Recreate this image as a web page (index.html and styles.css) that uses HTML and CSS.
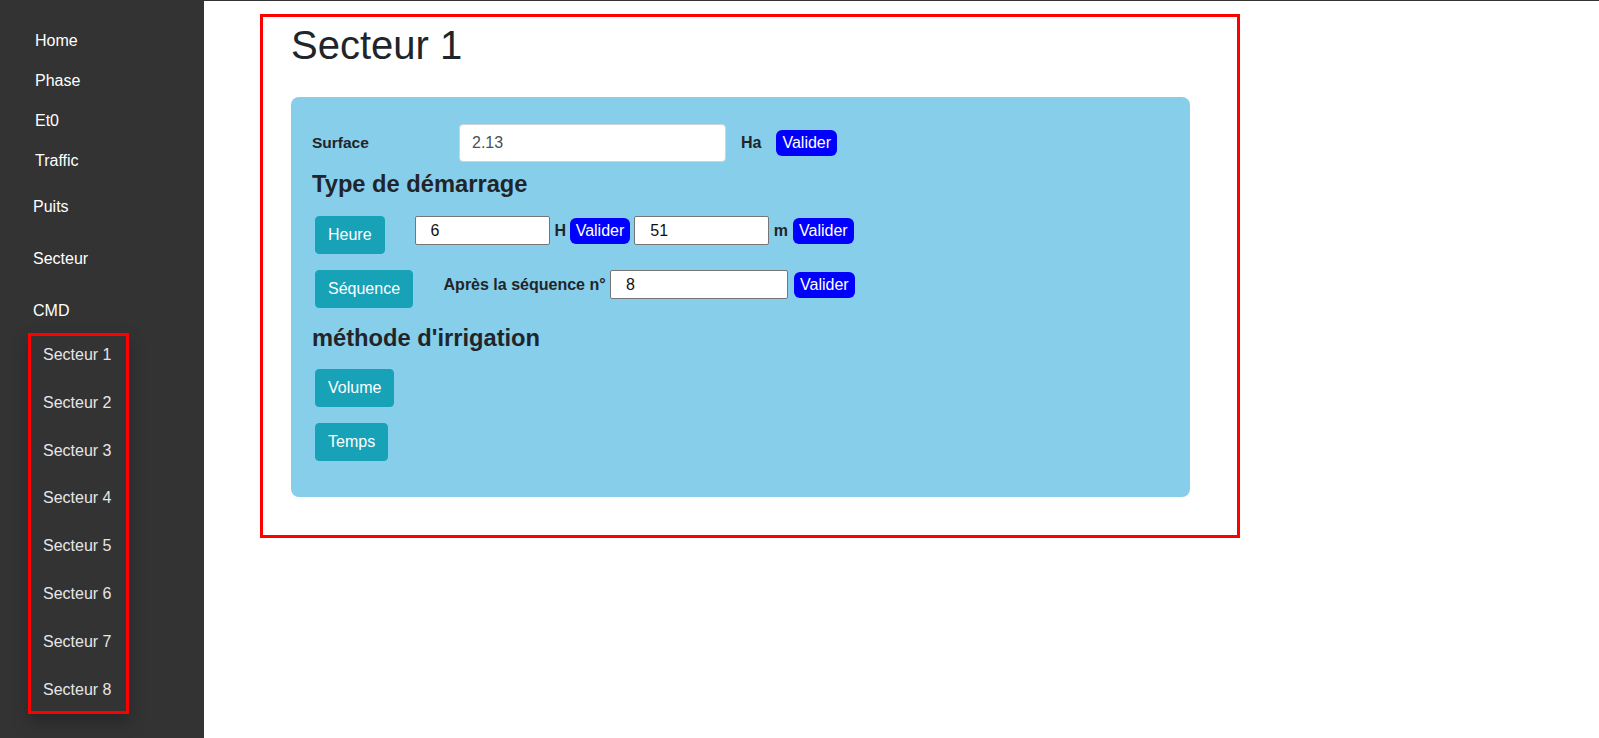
FILE: index.html
```html
<!DOCTYPE html>
<html lang="fr">
<head>
<meta charset="utf-8">
<title>Secteur 1</title>
<link rel="stylesheet" href="styles.css">
</head>
<body>
<div class="page">
  <nav class="sidebar">
    <a class="nav-a" href="#">Home</a>
    <a class="nav-a" href="#">Phase</a>
    <a class="nav-a" href="#">Et0</a>
    <a class="nav-a" href="#">Traffic</a>
    <a class="nav-b" href="#">Puits</a>
    <a class="nav-b" href="#">Secteur</a>
    <a class="nav-b" href="#">CMD</a>
    <div class="submenu">
      <a class="sub-link" href="#">Secteur 1</a>
      <a class="sub-link" href="#">Secteur 2</a>
      <a class="sub-link" href="#">Secteur 3</a>
      <a class="sub-link" href="#">Secteur 4</a>
      <a class="sub-link" href="#">Secteur 5</a>
      <a class="sub-link" href="#">Secteur 6</a>
      <a class="sub-link" href="#">Secteur 7</a>
      <a class="sub-link" href="#">Secteur 8</a>
    </div>
  </nav>
  <main class="main">
    <section class="frame">
      <h1 class="title">Secteur 1</h1>
      <div class="card">
        <div class="row row-surface">
          <label class="lbl lbl-surface">Surface</label>
          <input class="form-input" type="text" value="2.13">
          <span class="lbl unit-ha">Ha</span>
          <button class="btn-valider valider-ha">Valider</button>
        </div>

        <h4 class="section-title first-section">Type de démarrage</h4>

        <div class="row row-heure">
          <button class="btn-info">Heure</button>
          <div class="inline-group group-heure">
            <input class="small-input input-heure" type="text" value="6">
            <span class="lbl unit-h">H</span>
            <button class="btn-valider valider-h">Valider</button>
            <input class="small-input input-min" type="text" value="51">
            <span class="lbl unit-m">m</span>
            <button class="btn-valider valider-m">Valider</button>
          </div>
        </div>

        <div class="row row-sequence">
          <button class="btn-info">Séquence</button>
          <div class="inline-group group-seq">
            <span class="lbl lbl-seq">Après la séquence n°</span>
            <input class="small-input input-seq" type="text" value="8">
            <button class="btn-valider valider-seq">Valider</button>
          </div>
        </div>

        <h4 class="section-title second-section">méthode d'irrigation</h4>

        <div class="row row-volume">
          <button class="btn-info">Volume</button>
        </div>
        <div class="row row-temps">
          <button class="btn-info">Temps</button>
        </div>
      </div>
    </section>
  </main>
</div>
</body>
</html>
```
FILE: styles.css
```css
* {
  box-sizing: border-box;
}

html, body {
  margin: 0;
  padding: 0;
  background: #ffffff;
}

body {
  font-family: "Liberation Sans", Arial, sans-serif;
  font-size: 16px;
  color: #212529;
}

.page {
  display: flex;
  min-height: 100vh;
  border-top: 1px solid #333333;
}

/* Sidebar */
.sidebar {
  width: 204px;
  flex-shrink: 0;
  background: #333333;
  padding-top: 20px;
  display: flex;
  flex-direction: column;
  align-items: flex-start;
}

.sidebar a {
  text-decoration: none;
  font-size: 16px;
  line-height: 18px;
  display: block;
}

.nav-a {
  color: #ffffff;
  padding: 11px 0 11px 35px;
}

.nav-b {
  color: #ffffff;
  padding: 17px 0 17px 33px;
}

.submenu {
  margin-top: -4px;
  margin-left: 28px;
  width: 101px;
  border: 3px solid #ff0000;
  padding: 10px 0 12px;
  display: flex;
  flex-direction: column;
  gap: 29.8px;
  box-shadow: 0 8px 16px 0 rgba(0, 0, 0, 0.25);
}

.sidebar .sub-link {
  color: #e6e6e6;
  padding-left: 12px;
}

/* Main */
.main {
  flex: 1;
  padding: 13px 0 0 56px;
}

.frame {
  width: 980px;
  height: 524px;
  border: 3px solid #ff0000;
  padding-left: 28px;
}

.title {
  margin: 4px 0 0;
  font-size: 40px;
  line-height: 48px;
  font-weight: 400;
  color: #212529;
}

.card {
  margin-top: 28px;
  width: 899px;
  background: #87ceeb;
  border-radius: 8px;
  padding: 27px 0 36px 21px;
}

.row {
  display: flex;
  align-items: flex-start;
}

.row-surface {
  align-items: center;
}

.lbl {
  font-weight: 700;
  font-size: 16px;
  line-height: 18px;
  color: #212529;
}

.lbl-surface {
  width: 147px;
  font-size: 15.5px;
}

.form-input {
  width: 267px;
  height: 38px;
  padding: 0 12px;
  border: 1px solid #ced4da;
  border-radius: 4px;
  background: #ffffff;
  font-family: inherit;
  font-size: 16px;
  color: #495057;
}

.unit-ha {
  margin-left: 15px;
}

.btn-valider {
  height: 26px;
  padding: 0 6px;
  border: none;
  border-radius: 6px;
  background: #0000ff;
  color: #ffffff;
  font-family: inherit;
  font-size: 16px;
  line-height: 26px;
}

.valider-ha {
  margin-left: 15px;
}

.section-title {
  margin: 0;
  font-size: 23.7px;
  line-height: 29px;
  font-weight: 700;
  color: #212529;
}

.first-section {
  margin-top: 8px;
}

.second-section {
  margin-top: 16px;
}

.btn-info {
  margin-left: 3px;
  height: 38px;
  padding: 0 12px;
  border: 1px solid #17a2b8;
  border-radius: 4px;
  background: #17a2b8;
  color: #ffffff;
  font-family: inherit;
  font-size: 16px;
  line-height: 24px;
}

.row-heure {
  margin-top: 17px;
}

.row-sequence {
  margin-top: 16px;
}

.row-volume {
  margin-top: 16px;
}

.row-temps {
  margin-top: 16px;
}

.inline-group {
  display: flex;
  align-items: center;
  height: 29px;
}

.group-heure {
  margin-left: 30px;
}

.group-seq {
  margin-left: 30.5px;
}

.small-input {
  height: 29px;
  padding: 0 0 0 15px;
  border: 1px solid #767676;
  border-radius: 2px;
  background: #ffffff;
  font-family: inherit;
  font-size: 16px;
  color: #111111;
}

.input-heure,
.input-min {
  width: 135px;
}

.unit-h {
  margin-left: 5px;
}

.valider-h {
  margin-left: 3.5px;
}

.input-min {
  margin-left: 4px;
}

.unit-m {
  margin-left: 4.5px;
}

.valider-m {
  margin-left: 5px;
}

.input-seq {
  width: 178px;
  margin-left: 4.5px;
}

.valider-seq {
  margin-left: 6px;
}
```
